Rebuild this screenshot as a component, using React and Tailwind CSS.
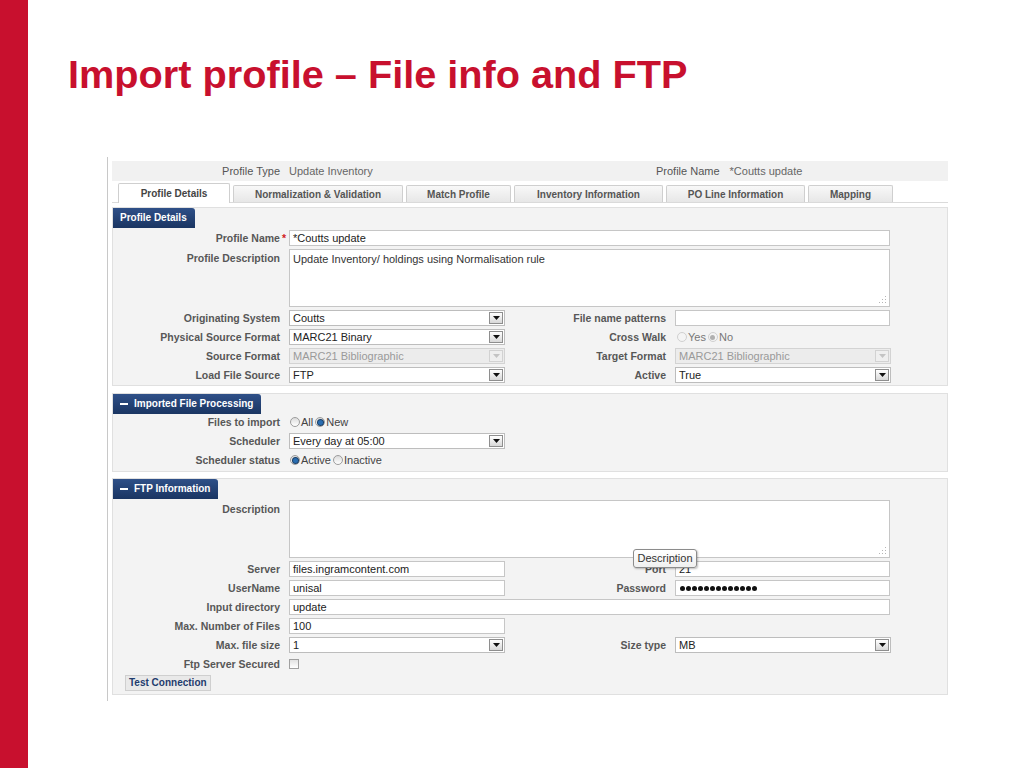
import React from "react";

const LBL =
  "w-[167px] shrink-0 text-right text-[10.5px] font-bold text-[#575757] leading-[16px] whitespace-nowrap";
const RLBL =
  "w-[161px] shrink-0 text-right text-[10.5px] font-bold text-[#575757] leading-[16px] whitespace-nowrap";

function Input({ w, children }) {
  return (
    <div
      className={`h-[16px] ${w} shrink-0 border border-[#c6c6c6] bg-white pl-[3px] text-[11px] text-[#222] leading-[14px] flex items-center whitespace-nowrap overflow-hidden`}
    >
      {children}
    </div>
  );
}

function Arrow({ disabled }) {
  return (
    <span
      className={`ml-auto mr-px w-[14px] h-[12px] shrink-0 border flex items-center justify-center ${
        disabled
          ? "border-[#d2d2d2] bg-[#efefef]"
          : "border-[#8e8e8e] bg-linear-to-b from-white to-[#d8d8d8]"
      }`}
    >
      <svg width="7" height="4" viewBox="0 0 7 4">
        <path d="M0 0H7L3.5 4Z" fill={disabled ? "#c4c4c4" : "#111"} />
      </svg>
    </span>
  );
}

function Select({ w, value, disabled }) {
  return (
    <div
      className={`h-[16px] ${w} shrink-0 border flex items-center pl-[3px] text-[11px] leading-[14px] whitespace-nowrap ${
        disabled
          ? "border-[#d3d3d3] bg-[#ececec] text-[#9a9a9a]"
          : "border-[#bdbdbd] bg-white text-[#222]"
      }`}
    >
      <span>{value}</span>
      <Arrow disabled={disabled} />
    </div>
  );
}

function Grip() {
  return (
    <svg
      className="absolute right-[2px] bottom-[2px]"
      width="9"
      height="9"
      viewBox="0 0 9 9"
    >
      <g fill="#b5b5b5">
        <rect x="7" y="1" width="1" height="1" />
        <rect x="4" y="4" width="1" height="1" />
        <rect x="7" y="4" width="1" height="1" />
        <rect x="1" y="7" width="1" height="1" />
        <rect x="4" y="7" width="1" height="1" />
        <rect x="7" y="7" width="1" height="1" />
      </g>
    </svg>
  );
}

function TextArea({ children }) {
  return (
    <div className="relative h-[58px] w-[601px] shrink-0 border border-[#c6c6c6] bg-white pl-[3px] pt-[2px] text-[11px] text-[#333] leading-[14px]">
      {children}
      <Grip />
    </div>
  );
}

function Radio({ checked, disabled }) {
  return (
    <span
      className={`inline-flex w-[10px] h-[10px] rounded-full border items-center justify-center shrink-0 ${
        disabled
          ? "border-[#d0d0d0] bg-[#f4f4f4]"
          : "border-[#9c9c9c] bg-linear-to-b from-[#dcdcdc] to-white"
      }`}
    >
      {checked && (
        <span
          className={`w-[5px] h-[5px] rounded-full ${
            disabled ? "bg-[#b0b0b0]" : "bg-[#2a6db0] ring-1 ring-[#1b3f66]"
          }`}
        />
      )}
    </span>
  );
}

function RadioOpt({ checked, disabled, label }) {
  return (
    <span className="inline-flex items-center gap-[1px] mr-[2px]">
      <Radio checked={checked} disabled={disabled} />
      <span
        className={`text-[11px] leading-[14px] ${
          disabled ? "text-[#777]" : "text-[#444]"
        }`}
      >
        {label}
      </span>
    </span>
  );
}

function Row({ label, children, right, rightLabel, top }) {
  return (
    <div className={`flex ${top ? "items-start" : "items-center h-[16px]"}`}>
      <div className={`${LBL} ${top ? "pt-[1px]" : ""}`}>{label}</div>
      <div className="ml-[9px] flex items-center">{children}</div>
      {rightLabel !== undefined && (
        <>
          <div className={RLBL}>{rightLabel}</div>
          <div className="ml-[9px] flex items-center">{right}</div>
        </>
      )}
    </div>
  );
}

function Badge({ children, minus }) {
  return (
    <div className="flex w-fit items-center h-[20px] pl-[7px] pr-[8px] rounded-tr-[3px] bg-linear-to-b from-[#2f5088] to-[#1a3562] text-white text-[10px] font-bold leading-none whitespace-nowrap">
      {minus && <span className="w-[8px] h-[2px] bg-white mr-[6px]" />}
      {children}
    </div>
  );
}

function Tab({ w, active, children }) {
  return active ? (
    <div
      className={`${w} h-[20px] -mb-px border border-b-0 border-[#cfcfcf] bg-white rounded-t-[2px] flex items-center justify-center text-[10px] font-bold text-[#444]`}
    >
      {children}
    </div>
  ) : (
    <div
      className={`${w} h-[17px] border border-b-0 border-[#cfcfcf] bg-linear-to-b from-[#f8f8f8] to-[#e7e7e7] rounded-t-[2px] flex items-center justify-center text-[10px] font-bold text-[#555] whitespace-nowrap`}
    >
      {children}
    </div>
  );
}

export default function App() {
  return (
    <div className="relative w-[1024px] h-[768px] bg-white flex overflow-hidden font-['Liberation_Sans',Arial,sans-serif]">
      <div className="w-[28px] h-full bg-[#c8102e] shrink-0" />
      <div className="flex-1 flex flex-col">
        <h1 className="ml-[40px] mt-[54px] text-[39.7px] leading-[40px] font-bold text-[#c8102e] whitespace-nowrap">
          Import profile – File info and FTP
        </h1>

        <div className="ml-[79px] mt-[63px] w-[841px] border-l border-[#c8c8c8] pl-[4px] pt-[4px] pb-[6px]">
          {/* header row */}
          <div className="h-[20px] bg-[#f1f1f1] flex items-center text-[11px]">
            <div className="w-[544px] flex items-center">
              <div className="w-[168px] text-right text-[#555]">
                Profile Type
              </div>
              <div className="ml-[9px] text-[#666]">Update Inventory</div>
            </div>
            <div className="text-[#555]">Profile Name</div>
            <div className="ml-[10px] text-[#666]">*Coutts update</div>
          </div>

          {/* tabs */}
          <div className="mt-[2px] h-[20px] flex items-end gap-[3px] pl-[6px] border-b border-[#dadada]">
            <Tab w="w-[112px]" active>
              Profile Details
            </Tab>
            <Tab w="w-[170px]">Normalization &amp; Validation</Tab>
            <Tab w="w-[105px]">Match Profile</Tab>
            <Tab w="w-[149px]">Inventory Information</Tab>
            <Tab w="w-[139px]">PO Line Information</Tab>
            <Tab w="w-[85px]">Mapping</Tab>
          </div>

          {/* Profile details section */}
          <div className="mt-[4px] border border-[#e0e0e0] bg-[#f3f3f3] pb-[2px]">
            <Badge>Profile Details</Badge>
            <div className="mt-[2px] flex flex-col gap-[3px]">
              <Row
                label={
                  <>
                    Profile Name
                    <span className="text-[#d02020] -mr-[6px] ml-[2px]">*</span>
                  </>
                }
              >
                <Input w="w-[601px]">*Coutts update</Input>
              </Row>
              <Row label="Profile Description" top>
                <TextArea>
                  Update Inventory/ holdings using Normalisation rule
                </TextArea>
              </Row>
              <Row
                label="Originating System"
                rightLabel="File name patterns"
                right={<Input w="w-[215px]" />}
              >
                <Select w="w-[216px]" value="Coutts" />
              </Row>
              <Row
                label="Physical Source Format"
                rightLabel="Cross Walk"
                right={
                  <div className="flex items-center pl-[2px]">
                    <RadioOpt disabled label="Yes" />
                    <RadioOpt disabled checked label="No" />
                  </div>
                }
              >
                <Select w="w-[216px]" value="MARC21 Binary" />
              </Row>
              <Row
                label="Source Format"
                rightLabel="Target Format"
                right={
                  <Select w="w-[216px]" value="MARC21 Bibliographic" disabled />
                }
              >
                <Select w="w-[216px]" value="MARC21 Bibliographic" disabled />
              </Row>
              <Row
                label="Load File Source"
                rightLabel="Active"
                right={<Select w="w-[216px]" value="True" />}
              >
                <Select w="w-[216px]" value="FTP" />
              </Row>
            </div>
          </div>

          {/* Imported file processing */}
          <div className="mt-[7px] border border-[#e0e0e0] bg-[#f3f3f3] pb-[3px]">
            <Badge minus>Imported File Processing</Badge>
            <div className="flex flex-col gap-[3px]">
              <Row label="Files to import">
                <div className="flex items-center pl-[1px]">
                  <RadioOpt label="All" />
                  <RadioOpt checked label="New" />
                </div>
              </Row>
              <Row label="Scheduler">
                <Select w="w-[216px]" value="Every day at 05:00" />
              </Row>
              <Row label="Scheduler status">
                <div className="flex items-center pl-[1px]">
                  <RadioOpt checked label="Active" />
                  <RadioOpt label="Inactive" />
                </div>
              </Row>
            </div>
          </div>

          {/* FTP information */}
          <div className="mt-[6px] border border-[#e0e0e0] bg-[#f3f3f3] pb-[3px]">
            <Badge minus>FTP Information</Badge>
            <div className="mt-[1px] flex flex-col gap-[3px]">
              <Row label="Description" top>
                <TextArea />
              </Row>
              <Row
                label="Server"
                rightLabel="Port"
                right={<Input w="w-[215px]">21</Input>}
              >
                <Input w="w-[216px]">files.ingramcontent.com</Input>
              </Row>
              <Row
                label="UserName"
                rightLabel="Password"
                right={
                  <Input w="w-[215px]">
                    <span className="flex gap-[1px] pl-[1px]">
                      {Array.from({ length: 13 }).map((_, i) => (
                        <span
                          key={i}
                          className="w-[5px] h-[5px] rounded-full bg-[#111]"
                        />
                      ))}
                    </span>
                  </Input>
                }
              >
                <Input w="w-[216px]">unisal</Input>
              </Row>
              <Row label="Input directory">
                <Input w="w-[601px]">update</Input>
              </Row>
              <Row label="Max. Number of Files">
                <Input w="w-[216px]">100</Input>
              </Row>
              <Row
                label="Max. file size"
                rightLabel="Size type"
                right={<Select w="w-[216px]" value="MB" />}
              >
                <Select w="w-[216px]" value="1" />
              </Row>
              <Row label="Ftp Server Secured">
                <span className="w-[10px] h-[10px] border border-[#a0a0a0] bg-linear-to-b from-[#e2e2e2] to-white" />
              </Row>
              <div className="h-[16px] flex">
                <div className="ml-[12px] h-[16px] px-[3px] border border-[#cfcfcf] bg-[#e9e9e9] text-[10px] font-bold text-[#1f3c6e] leading-[14px] whitespace-nowrap">
                  Test Connection
                </div>
              </div>
            </div>
          </div>
        </div>
      </div>

      {/* tooltip */}
      <div className="absolute left-[633px] top-[549px] w-[64px] h-[19px] border border-[#8c8c8c] rounded-[3px] bg-linear-to-b from-white to-[#f0f0f0] shadow-[1px_1px_2px_rgba(0,0,0,0.25)] flex items-center justify-center text-[11px] text-[#333]">
        Description
      </div>
    </div>
  );
}
